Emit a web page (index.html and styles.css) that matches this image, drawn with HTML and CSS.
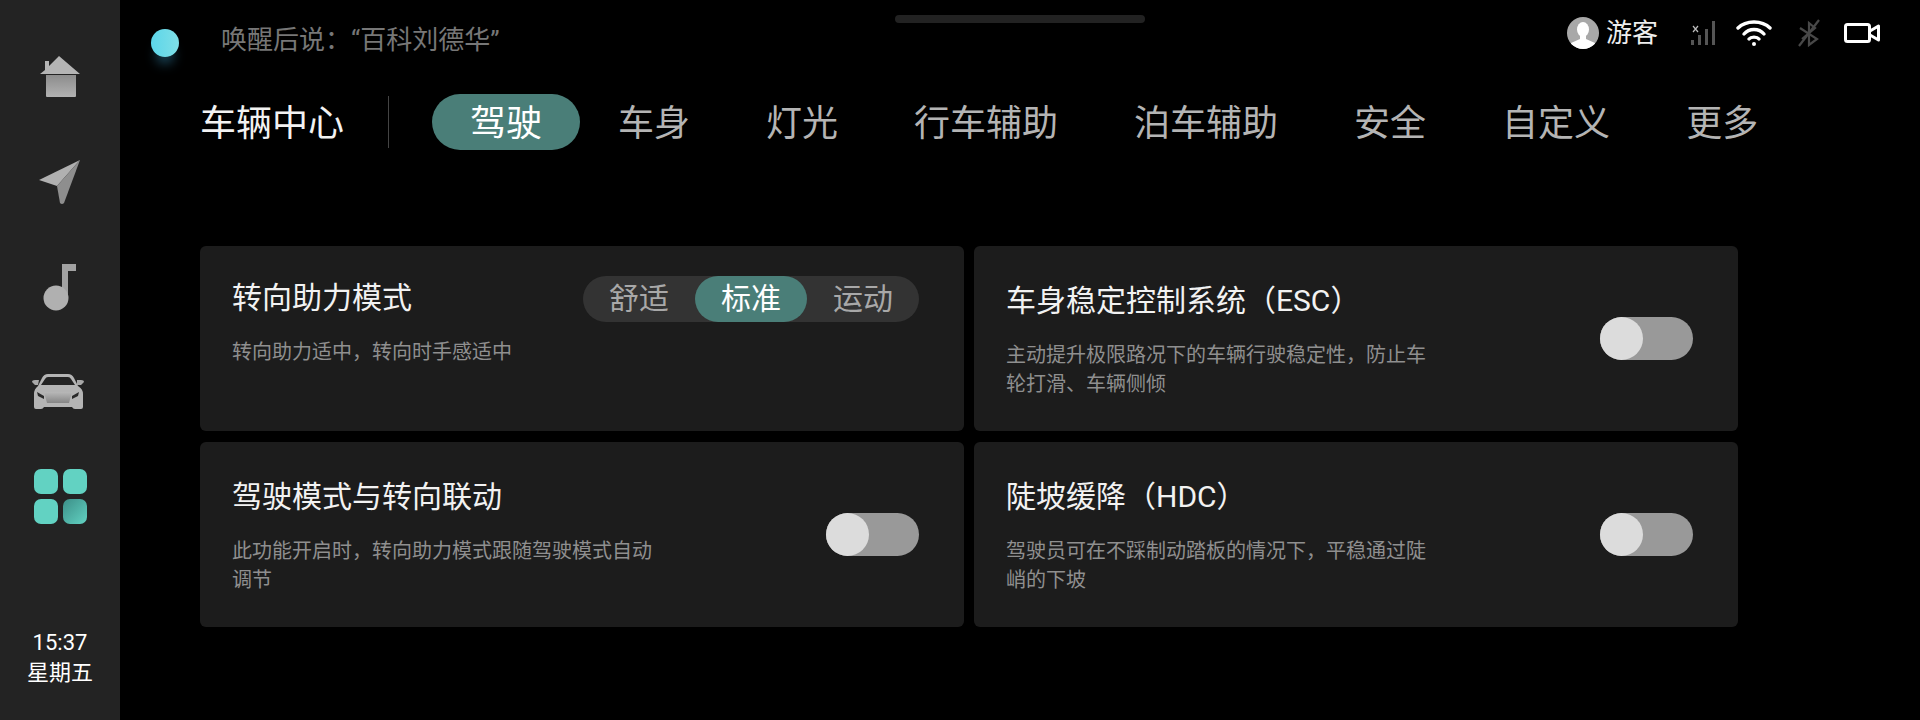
FILE: index.html
```html
<!DOCTYPE html>
<html lang="zh-CN">
<head>
    <meta charset="UTF-8">
    <title>车辆中心</title>
    <link rel="stylesheet" href="styles.css">
</head>
<body>
    <div class="app">
        <!-- 左侧导航 -->
        <aside class="sidebar">
            <div class="nav-item">
                <svg width="40" height="42" viewBox="0 0 40 42">
                    <defs>
                        <linearGradient id="grayFade" x1="0" y1="0" x2="0" y2="1">
                            <stop offset="0" stop-color="#8c8c8c"/>
                            <stop offset="1" stop-color="#b2b2b2"/>
                        </linearGradient>
                    </defs>
                    <path d="M19 0 L40 18 H0 L5 14 V5 H9 V10 Z" fill="#b4b4b4"/>
                    <path d="M6 19 H36 V40 Q36 41 35 41 H7 Q6 41 6 40 Z" fill="url(#grayFade)"/>
                </svg>
            </div>
            <div class="nav-item">
                <svg width="44" height="46" viewBox="0 0 44 46">
                    <path d="M42 1 L1 21 L19 27 Z" fill="#b0b0b0"/>
                    <path d="M42 1 L19 27 L22 44 Q24 46 26 44 Z" fill="#8e8e8e"/>
                </svg>
            </div>
            <div class="nav-item">
                <svg width="34" height="48" viewBox="0 0 34 48">
                    <path d="M19 1 H33 V8 H25 V35 H19 Z" fill="#a2a2a2"/>
                    <circle cx="13" cy="35" r="12.5" fill="#b0b0b0"/>
                </svg>
            </div>
            <div class="nav-item nav-item-car">
                <svg width="54" height="38" viewBox="0 0 54 38">
                    <defs>
                        <linearGradient id="carFade" x1="0" y1="0" x2="0" y2="1">
                            <stop offset="0" stop-color="#b8b8b8"/>
                            <stop offset="1" stop-color="#858585"/>
                        </linearGradient>
                    </defs>
                    <path d="M17 1 H37 Q41 1 43 5 L47 13 Q52 16 52 21 V34 Q52 36 50 36 H44 Q42 36 41 34 H13 Q12 36 10 36 H5 Q3 36 3 34 V21 Q3 16 7 13 L11 5 Q13 1 17 1 Z" fill="#b4b4b4"/>
                    <path d="M17 4 H37 Q39 4 40 6 L44 12 H10 L14 6 Q15 4 17 4 Z" fill="#232323"/>
                    <path d="M1 9 Q1 7 4 7 H8 L7 12 H4 Z M46 12 L46 7 H50 Q53 7 53 9 L50 12 Z" fill="#a8a8a8"/>
                    <path d="M13 19 H41 L38 30 H16 Z" fill="url(#carFade)"/>
                    <path d="M6 19 L13 23 V26 L7 23 Z M48 19 L41 23 V26 L47 23 Z" fill="#2a2a2a"/>
                </svg>
            </div>
            <div class="nav-item">
                <div class="apps-icon">
                    <span class="apps-cell"></span>
                    <span class="apps-cell"></span>
                    <span class="apps-cell"></span>
                    <span class="apps-cell apps-cell-dim"></span>
                </div>
            </div>
            <div class="clock">
                <div>15:37</div>
                <div>星期五</div>
            </div>
        </aside>

        <main class="main">
            <div class="handle"></div>

            <header class="topbar">
                <div class="orb"></div>
                <div class="hint">唤醒后说：“百科刘德华”</div>
                <div class="status">
                    <svg class="avatar" width="32" height="32" viewBox="0 0 32 32">
                        <defs>
                            <clipPath id="avatarClip"><circle cx="16" cy="16" r="16"/></clipPath>
                        </defs>
                        <circle cx="16" cy="16" r="16" fill="#a8a8a8"/>
                        <g clip-path="url(#avatarClip)" fill="#fff">
                            <ellipse cx="16" cy="12.5" rx="6" ry="7.5"/>
                            <path d="M13 18 H19 V22 L28 26 V32 H4 V26 L13 22 Z"/>
                        </g>
                    </svg>
                    <span class="user-name">游客</span>
                    <svg class="signal" width="26" height="26" viewBox="0 0 26 26">
                        <rect x="1" y="20" width="3" height="5" fill="#555"/>
                        <rect x="8" y="15" width="3" height="10" fill="#555"/>
                        <rect x="15" y="9" width="3" height="16" fill="#555"/>
                        <rect x="22" y="1" width="3" height="24" fill="#555"/>
                        <path d="M3 6 L8 12 M8 6 L3 12" stroke="#bbb" stroke-width="1.2"/>
                    </svg>
                    <svg class="wifi" width="36" height="26" viewBox="0 0 36 26">
                        <g fill="none" stroke="#fff" stroke-width="3.4" stroke-linecap="round">
                            <path d="M2 8 C10 0 26 0 34 8"/>
                            <path d="M8 14 C13 8 23 8 28 14"/>
                            <path d="M13 19 C15 16.500 21 16.500 23 19"/>
                        </g>
                        <circle cx="18" cy="24" r="2" fill="#fff"/>
                    </svg>
                    <svg class="bt-off" width="22" height="28" viewBox="0 0 22 28">
                        <path d="M2 9 L19 20 L11 26 V4 L17 9 L4 20" fill="none" stroke="#484848" stroke-width="2.2"/>
                        <path d="M21 1 L1 27" stroke="#484848" stroke-width="2.2"/>
                    </svg>
                    <svg class="camera" width="36" height="20" viewBox="0 0 36 20">
                        <rect x="1.500" y="1.500" width="24" height="17" rx="2" fill="none" stroke="#fff" stroke-width="3"/>
                        <path d="M26 8 L34.500 3 V17 L26 12" fill="none" stroke="#fff" stroke-width="3" stroke-linejoin="round"/>
                    </svg>
                </div>
            </header>

            <nav class="tabs">
                <div class="tabs-title">车辆中心</div>
                <div class="tabs-divider"></div>
                <div class="tab tab-active">驾驶</div>
                <div class="tab">车身</div>
                <div class="tab">灯光</div>
                <div class="tab">行车辅助</div>
                <div class="tab">泊车辅助</div>
                <div class="tab">安全</div>
                <div class="tab">自定义</div>
                <div class="tab">更多</div>
            </nav>

            <section class="cards">
                <div class="card card-steer">
                    <div class="card-text">
                        <div class="card-title">转向助力模式</div>
                        <div class="card-desc">转向助力适中，转向时手感适中</div>
                    </div>
                    <div class="segment">
                        <div class="segment-item">舒适</div>
                        <div class="segment-item segment-active">标准</div>
                        <div class="segment-item">运动</div>
                    </div>
                </div>
                <div class="card">
                    <div class="card-text">
                        <div class="card-title">车身稳定控制系统（ESC）</div>
                        <div class="card-desc">主动提升极限路况下的车辆行驶稳定性，防止车轮打滑、车辆侧倾</div>
                    </div>
                    <div class="toggle"><span class="toggle-knob"></span></div>
                </div>
                <div class="card">
                    <div class="card-text">
                        <div class="card-title">驾驶模式与转向联动</div>
                        <div class="card-desc">此功能开启时，转向助力模式跟随驾驶模式自动调节</div>
                    </div>
                    <div class="toggle"><span class="toggle-knob"></span></div>
                </div>
                <div class="card">
                    <div class="card-text">
                        <div class="card-title">陡坡缓降（HDC）</div>
                        <div class="card-desc">驾驶员可在不踩制动踏板的情况下，平稳通过陡峭的下坡</div>
                    </div>
                    <div class="toggle"><span class="toggle-knob"></span></div>
                </div>
            </section>
        </main>
    </div>
</body>
</html>
```

FILE: styles.css
```css
* {
    box-sizing: border-box;
}
body {
    margin: 0;
    background: #000;
    color: #fff;
    font-family: Roboto, "Noto Sans CJK SC", sans-serif;
}
.app {
    display: flex;
    width: 1920px;
    height: 720px;
    overflow: hidden;
}

/* sidebar */
.sidebar {
    width: 120px;
    flex-shrink: 0;
    display: flex;
    flex-direction: column;
    align-items: center;
    padding: 24px 0 32px;
    background: #232323;
}
.nav-item {
    height: 105px;
    display: flex;
    align-items: center;
    justify-content: center;
}
.nav-item-car {
    padding-right: 5px;
}
.apps-icon {
    display: grid;
    grid-template-columns: 24px 24px;
    grid-auto-rows: 25px;
    gap: 5px;
}
.apps-cell {
    border-radius: 7px;
    background: #62d2c2;
}
.apps-cell-dim {
    background: linear-gradient(135deg, #3c8f88, #62d2c2);
}
.clock {
    margin-top: auto;
    font-size: 22px;
    line-height: 30px;
    text-align: center;
}

/* main */
.main {
    position: relative;
    flex: 1;
    padding: 0 0 0 80px;
}
.handle {
    position: absolute;
    left: 775px;
    top: 15px;
    width: 250px;
    height: 8px;
    border-radius: 4px;
    background: #222;
}
.topbar {
    display: flex;
    align-items: flex-start;
    height: 94px;
}
.orb {
    width: 28px;
    height: 28px;
    margin: 29px 0 0 -49px;
    border-radius: 50%;
    background: linear-gradient(90deg, #5cd6ea, #7fdfe6);
    box-shadow: 0 12px 12px -5px rgba(50, 130, 165, 0.55);
}
.hint {
    margin: 22px 0 0 42px;
    font-size: 26px;
    line-height: 36px;
    color: #777;
}
.status {
    display: flex;
    align-items: center;
    margin: 15px 0 0 auto;
    padding-right: 40px;
}
.avatar {
    margin-right: -1px;
}
.user-name {
    margin-left: 8px;
    font-size: 26px;
    line-height: 36px;
    color: #eee;
}
.signal {
    margin-left: 32px;
}
.wifi {
    margin-left: 20px;
}
.bt-off {
    margin-left: 26px;
}
.camera {
    margin-left: 24px;
}

/* tabs */
.tabs {
    display: flex;
    align-items: center;
    height: 56px;
}
.tabs-title {
    height: 56px;
    font-size: 36px;
    line-height: 60px;
    color: #f2f2f2;
}
.tabs-divider {
    width: 1px;
    height: 52px;
    margin: 0 43px 0 44px;
    background: #444;
}
.tab {
    height: 56px;
    padding: 0 38px;
    font-size: 36px;
    line-height: 60px;
    color: #b4b4b4;
}
.tab-active {
    border-radius: 28px;
    background: #4a7e78;
    color: #fff;
}

/* cards */
.cards {
    display: grid;
    grid-template-columns: 764px 764px;
    grid-auto-rows: 185px;
    gap: 11px 10px;
    margin-top: 96px;
}
.card {
    display: flex;
    align-items: center;
    justify-content: space-between;
    padding: 0 45px 0 32px;
    border-radius: 6px;
    background: #1c1c1c;
}
.card-steer {
    align-items: flex-start;
    padding-top: 30px;
}
.card-text {
    width: 430px;
    align-self: flex-start;
    padding-top: 35px;
}
.card-steer .card-text {
    padding-top: 2px;
    width: auto;
}
.card-title {
    font-size: 30px;
    line-height: 40px;
    color: #f2f2f2;
    white-space: nowrap;
}
.card-desc {
    margin-top: 20px;
    font-size: 20px;
    line-height: 29px;
    color: #8f8f8f;
}
.segment {
    display: flex;
    height: 46px;
    border-radius: 23px;
    background: #333;
}
.segment-item {
    width: 112px;
    font-size: 30px;
    line-height: 46px;
    text-align: center;
    color: #a8a8a8;
}
.segment-active {
    border-radius: 23px;
    background: #4a7e78;
    color: #fff;
}
.toggle {
    width: 93px;
    height: 43px;
    border-radius: 22px;
    background: #999;
}
.toggle-knob {
    display: block;
    width: 43px;
    height: 43px;
    border-radius: 50%;
    background: #dcdcdc;
}
```
